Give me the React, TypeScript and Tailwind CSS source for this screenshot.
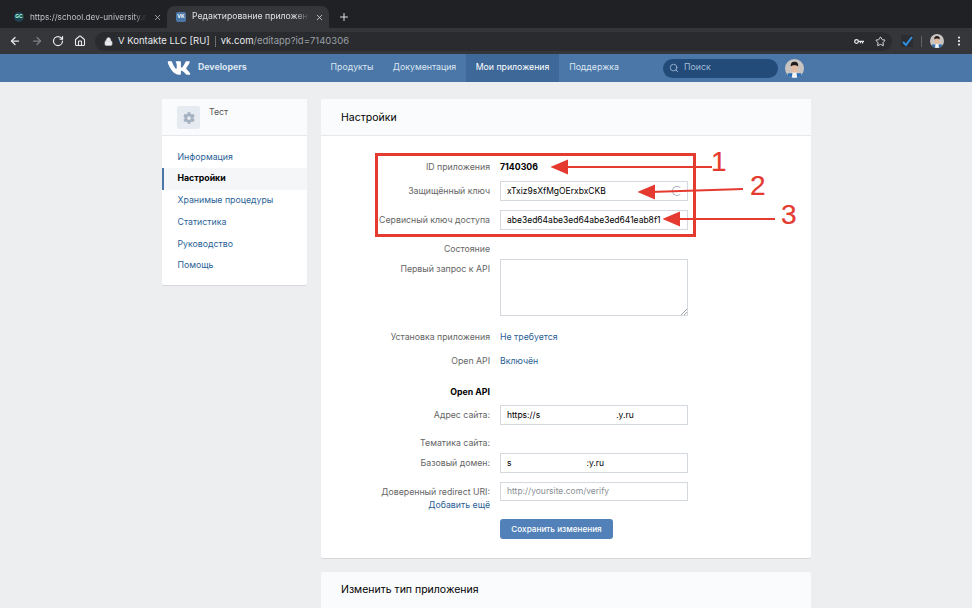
// VK Developers app settings page inside a dark Chrome window, with red annotations on top.
import type { ReactNode } from 'react';
import { ArrowLeft, ArrowRight, RotateCw, Home, Lock, Star, MoreVertical, Plus, X, Search } from 'lucide-react';
import { FaVk, FaCog } from 'react-icons/fa';

function Avatar({ size }: { size: string }) {
  return (
    <svg viewBox="0 0 20 20" className={`${size} shrink-0 rounded-full`}>
      <rect width="20" height="20" fill="#c9c4c0" />
      <rect x="3" y="15" width="14" height="5" fill="#2a6fb5" />
      <path d="M8 14h4l1 6H7z" fill="#f3f3f3" />
      <ellipse cx="10" cy="9.5" rx="3.6" ry="4.8" fill="#e2bca4" />
      <path d="M6 8c0-4 1.500-5 4-5s4 1 4 5c-2-2-6-2-8 0z" fill="#1f1a1c" />
    </svg>
  );
}

function Row({ label, mt, h = 'h-5', children }: { label: ReactNode; mt: string; h?: string; children?: ReactNode }) {
  return (
    <div className={`flex ${mt} ${h}`}>
      <div className="w-[169px] pt-[4px] text-right leading-[13px] text-[#656565]">{label}</div>
      <div className="ml-[10px] w-[188px]">{children}</div>
    </div>
  );
}

function Field({ children, muted, extra }: { children: ReactNode; muted?: boolean; extra?: ReactNode }) {
  return (
    <div className={`relative flex h-full items-center overflow-hidden whitespace-nowrap border border-[#d3d9de] bg-white pl-[6px] text-[8.5px] ${muted ? 'text-[#8a8f96]' : 'text-black'}`}>
      {children}
      {extra}
    </div>
  );
}

const menu = ['Информация', 'Настройки', 'Хранимые процедуры', 'Статистика', 'Руководство', 'Помощь'];

export default function App() {
  return (
    <div className="h-[608px] w-[972px] relative overflow-hidden bg-[#edeef0] text-[8.75px] font-['Inter','Noto_Sans',sans-serif]">
      {/* tab strip */}
      <div className="flex h-7 items-end bg-[#202124] pl-2 text-[#bdc1c6]">
        <div className="flex h-[22px] w-[159px] items-center pl-[6px]">
          <div className="flex h-[10px] w-[10px] items-center justify-center rounded-full bg-[#23424f] text-[5px] font-bold text-[#9fd]">GC</div>
          <span className="ml-[6px] w-[117px] overflow-hidden whitespace-nowrap text-[8.2px] [mask-image:linear-gradient(to_right,black_88%,transparent)]">https://school.dev-university.ru</span>
          <X className="ml-[6px] h-[9px] w-[9px]" strokeWidth={2} />
        </div>
        <div className="flex h-[22px] w-[162px] items-center rounded-t-lg bg-[#35363a] pl-[9px] text-[#dfe1e5]">
          <div className="flex h-[10px] w-[10px] items-center justify-center rounded-[2px] bg-[#4a76a8] text-[5px] font-bold text-white">VK</div>
          <span className="ml-[6px] w-[117px] overflow-hidden whitespace-nowrap text-[8.7px] [mask-image:linear-gradient(to_right,black_88%,transparent)]">Редактирование приложения</span>
          <X className="ml-[6px] h-[9px] w-[9px]" strokeWidth={2} />
        </div>
        <Plus className="mb-[5px] ml-[9px] h-[12px] w-[12px] text-[#dfe1e5]" strokeWidth={2} />
      </div>

      {/* toolbar */}
      <div className="flex h-[26px] items-center bg-[#35363a] pl-[9px] text-[#e8eaed]">
        <ArrowLeft className="h-3 w-3" strokeWidth={2.500} />
        <ArrowRight className="ml-[10px] h-3 w-3 text-[#7c7f84]" strokeWidth={2.500} />
        <RotateCw className="ml-[9px] h-3 w-3" strokeWidth={2.500} />
        <Home className="ml-[10px] h-3 w-3" strokeWidth={2.200} />
        <div className="ml-[9px] flex h-[19px] w-[797px] items-center rounded-full bg-[#292b2e] pl-[8px] text-[9.5px]">
          <Lock className="ml-[1px] h-[9px] w-[9px]" fill="#e8eaed" strokeWidth={2} />
          <span className="ml-[5px]">V Kontakte LLC [RU]</span>
          <span className="mx-[5px] h-[11px] w-px bg-[#6b6e72]" />
          <span>vk.com</span>
          <span className="text-[#9aa0a6]">/editapp?id=7140306</span>
          <svg viewBox="0 0 12 8" className="ml-auto h-[7px] w-[10px]">
            <circle cx="3" cy="4" r="2.200" fill="none" stroke="#e8eaed" strokeWidth="1.500" />
            <path d="M5 3h7v1.600h-1V6.500H9.500V4.600H8.500V6H7V4.600H5z" fill="#e8eaed" />
          </svg>
          <Star className="ml-[11px] mr-[6px] h-[11px] w-[11px]" strokeWidth={2} />
        </div>
        <svg viewBox="0 0 12 12" className="ml-[9px] h-3 w-3">
          <rect width="12" height="12" fill="#2b2d30" />
          <path d="M2 7l3 3 6-8" fill="none" stroke="#2f8fe0" strokeWidth="2" />
        </svg>
        <span className="ml-[8px] h-[11px] w-px bg-[#5f6368]" />
        <Avatar size="ml-[8px] h-[14px] w-[14px]" />
        <MoreVertical className="ml-[9px] h-[12px] w-[12px]" strokeWidth={2.500} />
      </div>

      {/* VK header */}
      <div className="flex h-7 items-center bg-[#4a76a8] text-[#dde6f0]">
        <FaVk className="ml-[167px] h-[24px] w-[24px] text-white" />
        <span className="ml-[7px] w-[123px] text-[8.75px] font-bold">Developers</span>
        <div className="flex h-full w-[62px] items-center justify-center">Продукты</div>
        <div className="flex h-full w-[83px] items-center justify-center">Документация</div>
        <div className="flex h-full w-[93px] items-center justify-center bg-[#3d6898] text-white">Мои приложения</div>
        <div className="flex h-full w-[70px] items-center justify-center">Поддержка</div>
        <div className="ml-[34px] flex h-[19px] w-[115px] items-center rounded-full bg-[#224b7a] pl-[6px] text-[#a5bcd6]">
          <Search className="h-[10px] w-[10px]" strokeWidth={2} />
          <span className="ml-[5px]">Поиск</span>
        </div>
        <Avatar size="ml-[7px] h-[19px] w-[19px]" />
      </div>

      {/* page */}
      <div className="flex items-start pl-[162px] pt-[17px]">
        <div className="w-[145px] rounded-[2px] bg-white shadow-[0_1px_0_0_#d7d8db]">
          <div className="flex h-[37px] border-b border-[#e7e8ec] bg-[#fafbfc] pl-[15px] pt-[7px]">
            <div className="flex h-[23px] w-[23px] items-center justify-center rounded-[2px] bg-[#e5ebf1]">
              <FaCog className="h-[12px] w-[12px] text-[#a4b2c1]" />
            </div>
            <span className="ml-[9px] text-[#555]">Тест</span>
          </div>
          <div className="pb-[8px] pt-[10.500px]">
            {menu.map((item) => (
              <div
                key={item}
                className={
                  item === 'Настройки'
                    ? 'flex h-[21.700px] items-center border-l-2 border-[#4a76a8] bg-[#f5f6f8] pl-[13.500px] font-bold text-black'
                    : 'flex h-[21.700px] items-center pl-[15.500px] text-[#2b5f95]'
                }
              >
                {item}
              </div>
            ))}
          </div>
        </div>

        <div className="ml-[14px] w-[490px]">
          <div className="h-[459px] rounded-[2px] bg-white shadow-[0_1px_0_0_#d7d8db]">
            <div className="flex h-[37px] items-center border-b border-[#e7e8ec] bg-[#fafbfc] pl-5 pt-[1px] text-[10.500px] text-black">Настройки</div>
            <Row label="ID приложения" mt="mt-[21px]">
              <div className="pt-[4px] leading-[13px] font-bold text-black">7140306</div>
            </Row>
            <Row label="Защищённый ключ" mt="mt-1">
              <Field extra={<span className="absolute right-[5px] top-[4px] h-[10px] w-[10px] rounded-full border border-[#a9b0b8] border-r-transparent" />}>xTxiz9sXfMgOErxbxCKB</Field>
            </Row>
            <Row label="Сервисный ключ доступа" mt="mt-[9px]">
              <Field>abe3ed64abe3ed64abe3ed641eab8f1</Field>
            </Row>
            <Row label="Состояние" mt="mt-[9px]" />
            <Row label="Первый запрос к API" mt="mt-0" h="h-[57px]">
              <Field
                extra={
                  <svg viewBox="0 0 6 6" className="absolute bottom-0 right-0 h-[6px] w-[6px]">
                    <path d="M0 6L6 0M3 6L6 3" stroke="#777" strokeWidth="0.7" />
                  </svg>
                }
              >
                {' '}
              </Field>
            </Row>
            <Row label="Установка приложения" mt="mt-[11px]">
              <div className="pt-[4px] leading-[13px] text-[#2b5f95]">Не требуется</div>
            </Row>
            <Row label="Open API" mt="mt-1">
              <div className="pt-[4px] leading-[13px] text-[#2b5f95]">Включён</div>
            </Row>
            <Row label={<span className="font-bold text-black">Open API</span>} mt="mt-[11px]" />
            <Row label="Адрес сайта:" mt="mt-[3px]">
              <Field>https://s<span className="ml-[76px]">.y.ru</span></Field>
            </Row>
            <Row label="Тематика сайта:" mt="mt-2" />
            <Row label="Базовый домен:" mt="mt-0">
              <Field>s<span className="ml-[75px]">:y.ru</span></Field>
            </Row>
            <Row
              label={
                <>
                  Доверенный redirect URI:
                  <div className="text-[#2b5f95]">Добавить ещё</div>
                </>
              }
              mt="mt-[9px]"
              h="h-[19px]"
            >
              <Field muted>http://yoursite.com/verify</Field>
            </Row>
            <div className="ml-[179px] mt-[18px] flex h-5 w-[113px] items-center justify-center whitespace-nowrap rounded-[3px] bg-[#5181b8] text-[8.2px] font-medium text-white">
              Сохранить изменения
            </div>
          </div>
          <div className="mt-[14px] flex h-[37px] items-center rounded-t-[2px] border-b border-[#e7e8ec] bg-[#fafbfc] pl-5 text-[10.500px] text-black">
            Изменить тип приложения
          </div>
        </div>
      </div>

      {/* annotations */}
      <div className="absolute left-[375px] top-[153px] h-[84px] w-[321px] border-[3px] border-[#e53a30]" />
      <svg className="absolute left-0 top-0 h-[608px] w-[972px]" viewBox="0 0 972 608">
        <g fill="#e53a30" stroke="#e53a30" strokeWidth="2">
          <line x1="712" y1="167" x2="562" y2="167" />
          <path d="M553 167l14-6v12z" />
          <line x1="743" y1="189" x2="650" y2="192" />
          <path d="M640 192l14-6v12z" />
          <line x1="775" y1="219" x2="674" y2="219" />
          <path d="M665 219l14-6v12z" />
        </g>
      </svg>
      <span className="absolute left-[711px] top-[146px] text-[28px] leading-[32px] text-[#e53a30] [-webkit-text-stroke:0.2px_#e53a30] font-['Liberation_Sans',sans-serif]">1</span>
      <span className="absolute left-[750px] top-[170px] text-[28px] leading-[32px] text-[#e53a30] [-webkit-text-stroke:0.2px_#e53a30] font-['Liberation_Sans',sans-serif]">2</span>
      <span className="absolute left-[781px] top-[199px] text-[28px] leading-[32px] text-[#e53a30] [-webkit-text-stroke:0.2px_#e53a30] font-['Liberation_Sans',sans-serif]">3</span>
    </div>
  );
}
